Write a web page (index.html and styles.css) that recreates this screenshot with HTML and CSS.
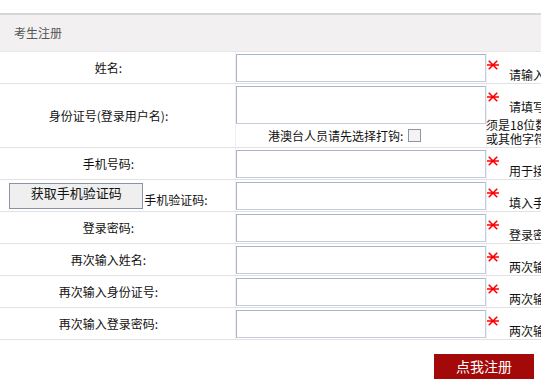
FILE: index.html
```html
<!DOCTYPE html>
<html lang="zh-CN">
<head>
<meta charset="utf-8">
<title>考生注册</title>
<link rel="stylesheet" href="styles.css">
</head>
<body>
<div class="page">
  <div class="panel-head">考生注册</div>
  <div class="form">
    <div class="row">
      <div class="lbl">姓名:</div>
      <div class="fld"><input class="txt" type="text"></div>
      <div class="hint"><svg class="star" viewBox="0 0 12 12"><path d="M0 6H12M1.8 1.8L10.2 10.2M10.2 1.8L1.8 10.2"/></svg>请输入您的真实姓名</div>
    </div>
    <div class="row">
      <div class="lbl">身份证号(登录用户名):</div>
      <div class="fld">
        <input class="txt tall" type="text">
        <div class="hk">港澳台人员请先选择打钩:<input class="chk" type="checkbox"></div>
      </div>
      <div class="hint"><svg class="star" viewBox="0 0 12 12"><path d="M0 6H12M1.8 1.8L10.2 10.2M10.2 1.8L1.8 10.2"/></svg>请填写您的身份证号码，必<span class="cont first">须是18位数字，不能含有空格</span><span class="cont">或其他字符</span></div>
    </div>
    <div class="row">
      <div class="lbl">手机号码:</div>
      <div class="fld"><input class="txt" type="text"></div>
      <div class="hint"><svg class="star" viewBox="0 0 12 12"><path d="M0 6H12M1.8 1.8L10.2 10.2M10.2 1.8L1.8 10.2"/></svg>用于接收验证码的手机号码</div>
    </div>
    <div class="row">
      <div class="lbl code"><button class="getcode" type="button">获取手机验证码</button>手机验证码:</div>
      <div class="fld"><input class="txt" type="text"></div>
      <div class="hint"><svg class="star" viewBox="0 0 12 12"><path d="M0 6H12M1.8 1.8L10.2 10.2M10.2 1.8L1.8 10.2"/></svg>填入手机收到的验证码</div>
    </div>
    <div class="row">
      <div class="lbl">登录密码:</div>
      <div class="fld"><input class="txt" type="password"></div>
      <div class="hint"><svg class="star" viewBox="0 0 12 12"><path d="M0 6H12M1.8 1.8L10.2 10.2M10.2 1.8L1.8 10.2"/></svg>登录密码为6到16位字符</div>
    </div>
    <div class="row">
      <div class="lbl">再次输入姓名:</div>
      <div class="fld"><input class="txt" type="text"></div>
      <div class="hint"><svg class="star" viewBox="0 0 12 12"><path d="M0 6H12M1.8 1.8L10.2 10.2M10.2 1.8L1.8 10.2"/></svg>两次输入的姓名必须一致</div>
    </div>
    <div class="row">
      <div class="lbl">再次输入身份证号:</div>
      <div class="fld"><input class="txt" type="text"></div>
      <div class="hint"><svg class="star" viewBox="0 0 12 12"><path d="M0 6H12M1.8 1.8L10.2 10.2M10.2 1.8L1.8 10.2"/></svg>两次输入的身份证号必须一致</div>
    </div>
    <div class="row">
      <div class="lbl">再次输入登录密码:</div>
      <div class="fld"><input class="txt" type="password"></div>
      <div class="hint"><svg class="star" viewBox="0 0 12 12"><path d="M0 6H12M1.8 1.8L10.2 10.2M10.2 1.8L1.8 10.2"/></svg>两次输入的密码必须一致</div>
    </div>
  </div>
  <div class="actions"><button class="submit" type="button">点我注册</button></div>
</div>
</body>
</html>
```

FILE: styles.css
```css
html, body {
  margin: 0;
  padding: 0;
  background: #fff;
  overflow: hidden;
}
body {
  font-family: "Noto Sans CJK SC", "Liberation Sans", sans-serif;
  font-size: 12px;
  color: #111;
}
.page {
  width: 100%;
  padding-top: 13px;
  overflow: hidden;
}
.panel-head {
  height: 36px;
  line-height: 36px;
  padding-left: 14px;
  background: #f2f0f0;
  border-top: 2px solid #d6d6d6;
  border-bottom: 1px solid #e6e6e6;
  color: #555;
  font-size: 12px;
}
.form {
  width: 800px;
}
.row {
  display: grid;
  grid-template-columns: 235px 252px 313px;
  border-bottom: 1px solid #e2e2e2;
}
.lbl {
  display: flex;
  align-items: center;
  justify-content: center;
  padding-right: 18px;
  white-space: nowrap;
  line-height: 14px;
}
.lbl.code {
  display: block;
  align-self: center;
  text-align: center;
  line-height: 14px;
}
.fld {
  box-sizing: border-box;
  border-left: 1px solid #efefef;
  border-right: 1px solid #efefef;
  padding: 2px 0 1px;
}
.txt {
  display: block;
  box-sizing: border-box;
  width: 250px;
  height: 28px;
  margin: 0;
  padding: 0 3px;
  border: 1px solid #c3cbdc;
  border-top-color: #aab3c9;
  border-left-color: #aab3c9;
  background: #fff;
  outline: none;
}
.txt.tall {
  height: 38px;
}
.hk {
  height: 22px;
  display: flex;
  align-items: center;
  padding-left: 32px;
  white-space: nowrap;
}
.chk {
  appearance: none;
  -webkit-appearance: none;
  width: 13px;
  height: 13px;
  margin: 0 0 0 5px;
  border: 1px solid #8e959f;
  background: #f3f3f3;
  box-sizing: border-box;
}
.hint {
  padding: 7px 0 0 1px;
  line-height: 13px;
  white-space: nowrap;
}
.star {
  width: 12px;
  height: 12px;
  margin: 0 10px 0 -1px;
  vertical-align: 9px;
  fill: none;
  stroke: #f00;
  stroke-width: 1.6;
}
.cont {
  display: block;
  margin-left: -2px;
  line-height: 14px;
}
.cont.first {
  margin-top: 5px;
}
.getcode {
  box-sizing: border-box;
  width: 134px;
  height: 26px;
  margin: 0 1px 0 0;
  padding: 0 0 5px;
  border: 1px solid #8a93a3;
  background: #efefef;
  font-family: inherit;
  font-size: 13px;
  color: #111;
  line-height: 14px;
  vertical-align: 6px;
}
.actions {
  display: flex;
  justify-content: flex-end;
  padding: 14px 7px 0 0;
}
.submit {
  width: 100px;
  height: 25px;
  border: none;
  margin: 0;
  padding: 0;
  background: #a30909;
  color: #fff;
  font-family: inherit;
  font-size: 14px;
  line-height: 25px;
}
```
